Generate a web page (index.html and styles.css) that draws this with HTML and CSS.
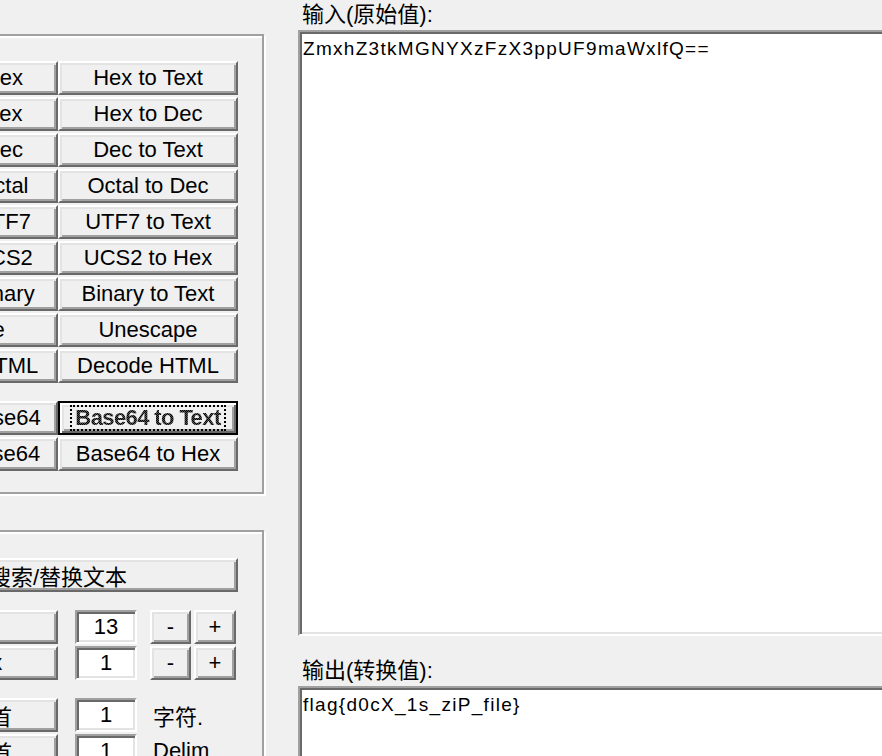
FILE: index.html
```html
<!DOCTYPE html>
<html lang="zh-CN">
<head>
  <meta charset="UTF-8">
  <title>Converter</title>
  <link rel="stylesheet" href="styles.css">
</head>
<body>
  <div class="app">
    <div class="tools">
      <div class="group">
        <div class="grid">
          <button class="btn">Text to Hex</button><button class="btn">Hex to Text</button>
          <button class="btn">Dec to Hex</button><button class="btn">Hex to Dec</button>
          <button class="btn">Text to Dec</button><button class="btn">Dec to Text</button>
          <button class="btn">Dec to Octal</button><button class="btn">Octal to Dec</button>
          <button class="btn">Text to UTF7</button><button class="btn">UTF7 to Text</button>
          <button class="btn">Text to UCS2</button><button class="btn">UCS2 to Hex</button>
          <button class="btn">Text to Binary</button><button class="btn">Binary to Text</button>
          <button class="btn">Escape</button><button class="btn">Unescape</button>
          <button class="btn">Encode HTML</button><button class="btn">Decode HTML</button>
        </div>
        <div class="grid">
          <button class="btn">Text to Base64</button><button class="btn default"><span class="focus">Base64 to Text</span></button>
          <button class="btn">Hex to Base64</button><button class="btn">Base64 to Hex</button>
        </div>
      </div>

      <div class="group lower">
        <button class="btn wide">搜索/替换文本</button>

        <div class="row">
          <button class="btn">字号</button>
          <input class="field" type="text" value="13">
          <button class="btn step">-</button><button class="btn step">+</button>
        </div>
        <div class="row tight">
          <button class="btn">To Hex</button>
          <input class="field" type="text" value="1">
          <button class="btn step">-</button><button class="btn step">+</button>
        </div>

        <div class="row">
          <button class="btn">删除行首</button>
          <input class="field" type="text" value="1">
          <span class="unit">字符.</span>
        </div>
        <div class="row tight">
          <button class="btn">截取行首</button>
          <input class="field" type="text" value="1">
          <span class="unit">Delim</span>
        </div>
      </div>
    </div>

    <div class="editor">
      <div class="label">输入(原始值):</div>
      <textarea class="text input" spellcheck="false">ZmxhZ3tkMGNYXzFzX3ppUF9maWxlfQ==</textarea>
      <div class="label out">输出(转换值):</div>
      <textarea class="text output" spellcheck="false">flag{d0cX_1s_ziP_file}</textarea>
    </div>
  </div>
</body>
</html>
```

FILE: styles.css
```css
* {
  box-sizing: border-box;
}
body {
  margin: 0;
  height: 756px;
  overflow: hidden;
  background: #f0f0f0;
  color: #000;
  font-family: 'Liberation Sans', 'Noto Sans CJK SC', sans-serif;
  font-size: 22px;
}
.app {
  display: flex;
  height: 756px;
  margin-left: -148px;
}
.tools {
  flex: none;
  width: 414px;
  padding-top: 34px;
}
.group {
  width: 412px;
  border: 2px solid #a0a0a0;
  box-shadow: inset 2px 2px #fff, 2px 2px #fff;
  padding: 25px 24px 21px;
}
.group.lower {
  margin-top: 36px;
  padding-top: 26px;
  height: 300px;
}
.grid {
  display: grid;
  grid-template-columns: 180px 180px;
  grid-auto-rows: 34px;
  row-gap: 2px;
}
.grid + .grid {
  margin-top: 18px;
}
.btn {
  display: flex;
  align-items: center;
  justify-content: center;
  flex: none;
  height: 34px;
  margin: 0;
  padding: 0;
  border: 2px solid;
  border-color: #fff #696969 #696969 #fff;
  box-shadow: inset 2px 2px #e3e3e3, inset -2px -2px #a0a0a0;
  background: #f0f0f0;
  color: #000;
  font: inherit;
  white-space: nowrap;
  overflow: hidden;
}
.btn.default {
  border-color: #000;
  box-shadow: inset 2px 2px #fff, inset -2px -2px #696969, inset 4px 4px #e3e3e3, inset -4px -4px #a0a0a0;
}
.focus {
  padding: 0 3px;
  border: 2px dotted #000;
  line-height: 22px;
  font-weight: bold;
  letter-spacing: -0.6px;
  background: repeating-conic-gradient(#000 0 25%, #555 0 50%) 0 0 / 2px 2px;
  -webkit-background-clip: text;
  background-clip: text;
  color: transparent;
}
.wide {
  width: 360px;
}
.row {
  display: flex;
  align-items: center;
  margin-top: 18px;
}
.row.tight {
  margin-top: 2px;
}
.row .btn {
  width: 180px;
}
.row .btn.step {
  width: 41px;
  margin-left: 13px;
}
.row .btn.step + .btn.step {
  width: 42px;
  margin-left: 3px;
}
.field {
  flex: none;
  width: 62px;
  height: 34px;
  margin: 0 0 0 17px;
  padding: 0;
  border: 2px solid;
  border-color: #a0a0a0 #fff #fff #a0a0a0;
  box-shadow: inset 2px 2px #696969, inset -2px -2px #e3e3e3;
  background: #fff;
  color: #000;
  font: inherit;
  text-align: center;
  outline: none;
}
.unit {
  margin-left: 16px;
  white-space: nowrap;
}
.editor {
  flex: none;
  display: flex;
  flex-direction: column;
  width: 620px;
  margin-left: 32px;
}
.label {
  flex: none;
  height: 30px;
  line-height: 30px;
  padding-left: 4px;
}
.label.out {
  margin-top: 20px;
}
.text {
  display: block;
  flex: none;
  margin: 0;
  padding: 6px 3px;
  border: 2px solid;
  border-color: #a0a0a0 #fff #fff #a0a0a0;
  box-shadow: inset 2px 2px #696969, inset -2px -2px #e3e3e3;
  background: #fff;
  color: #000;
  font-family: 'Liberation Sans', sans-serif;
  font-size: 19px;
  letter-spacing: 1.3px;
  line-height: 22px;
  resize: none;
  outline: none;
  overflow: hidden;
}
.text.input {
  height: 606px;
}
.text.output {
  height: 200px;
}
```
